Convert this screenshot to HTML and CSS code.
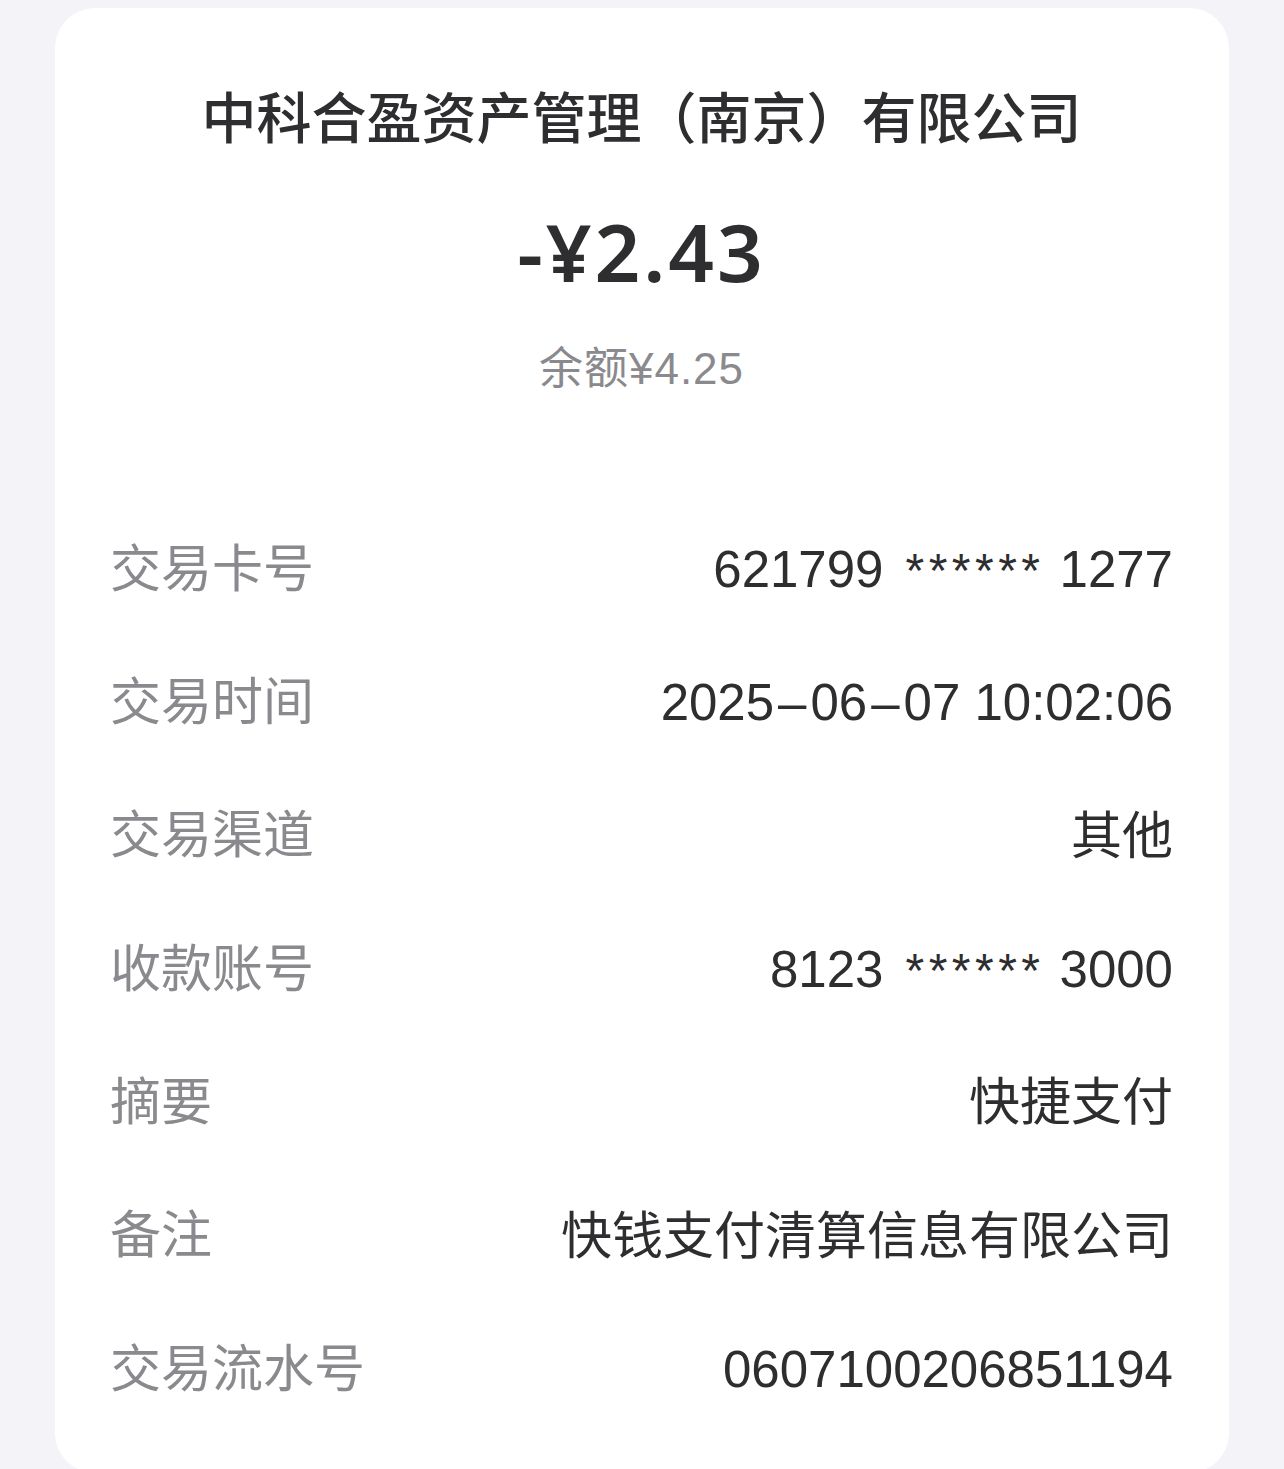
FILE: index.html
```html
<!DOCTYPE html>
<html lang="zh-CN">
<head>
<meta charset="utf-8">
<title>交易详情</title>
<link rel="stylesheet" href="styles.css">
</head>
<body>
<main class="card">
  <h1 class="payee">中科合盈资产管理（南京）有限公司</h1>
  <div class="amount">-¥2.43</div>
  <div class="balance">余额¥4.25</div>
  <dl class="details">
    <div class="row"><dt>交易卡号</dt><dd>621799<span class="mask">******</span>1277</dd></div>
    <div class="row"><dt>交易时间</dt><dd>2025<span class="dash">–</span>06<span class="dash">–</span>07 10:02:06</dd></div>
    <div class="row"><dt>交易渠道</dt><dd>其他</dd></div>
    <div class="row"><dt>收款账号</dt><dd>8123<span class="mask">******</span>3000</dd></div>
    <div class="row"><dt>摘要</dt><dd>快捷支付</dd></div>
    <div class="row"><dt>备注</dt><dd>快钱支付清算信息有限公司</dd></div>
    <div class="row"><dt>交易流水号</dt><dd>0607100206851194</dd></div>
  </dl>
</main>
</body>
</html>
```

FILE: styles.css
```css
html, body {
  margin: 0;
  padding: 0;
}
body {
  background: #f4f4f8;
  font-family: "Noto Sans CJK SC", sans-serif;
  color: #2e2e30;
  padding: 8px 55px 0 55px;
}
.card {
  background: #ffffff;
  border-radius: 40px;
  height: 1465px;
  box-sizing: border-box;
  padding: 71px 56px 0 55px;
  display: flex;
  flex-direction: column;
  align-items: stretch;
}
.payee {
  margin: 0;
  text-align: center;
  font-size: 55px;
  line-height: 70px;
  font-weight: 500;
  color: #2e2e30;
}
.amount {
  margin-top: 52px;
  text-align: center;
  font-family: "Noto Sans", sans-serif;
  font-size: 80px;
  line-height: 100px;
  font-weight: 600;
  letter-spacing: 3px;
  color: #2e2e30;
}
.balance {
  margin-top: 38px;
  text-align: center;
  font-family: "Liberation Sans", "Noto Sans CJK SC", sans-serif;
  font-size: 44px;
  line-height: 60px;
  letter-spacing: 1px;
  color: #8a8a8e;
}
.details {
  margin: 99px 0 0 0;
  display: flex;
  flex-direction: column;
}
.row {
  height: 133.33px;
  display: flex;
  align-items: center;
  justify-content: space-between;
}
.row dt {
  font-size: 51px;
  line-height: 70px;
  color: #8a8a8e;
}
.row dd {
  margin: 0;
  padding-top: 11px;
  font-family: "Liberation Sans", "Noto Sans CJK SC", sans-serif;
  font-size: 51px;
  line-height: 70px;
  color: #2e2e30;
  text-align: right;
}
.mask {
  font-size: 48px;
  letter-spacing: 4.5px;
  margin-left: 22px;
  margin-right: 15px;
}
.dash {
  margin: 0 4px;
}
```
